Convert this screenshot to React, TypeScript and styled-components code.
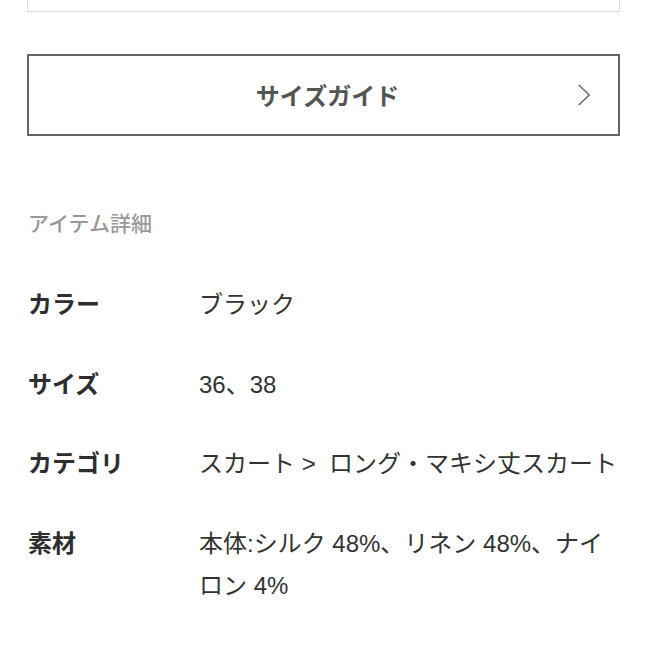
import React from 'react';
import styled, { createGlobalStyle } from 'styled-components';

const GlobalStyle = createGlobalStyle`
  html, body {
    margin: 0;
    padding: 0;
    background: #fff;
  }
  body {
    font-family: "Liberation Sans", "Noto Sans CJK JP", sans-serif;
    color: #333;
  }
`;

const specs = [
  { label: 'カラー', value: 'ブラック' },
  { label: 'サイズ', value: '36、38' },
  { label: 'カテゴリ', value: 'スカート >\u00a0 ロング・マキシ丈スカート' },
  { label: '素材', value: '本体:シルク 48%、リネン 48%、ナイロン 4%' },
];

export default function App() {
  return (
    <>
      <GlobalStyle />
      <Page>
        <TopBox />
        <GuideButton type='button'>
          <span>サイズガイド</span>
          <Chevron viewBox='0 0 16 26' aria-hidden='true'>
            <polyline points='2,1.5 14,13 2,24.5' />
          </Chevron>
        </GuideButton>

        <Heading>アイテム詳細</Heading>

        <SpecList>
          {specs.map((s) => (
            <SpecRow key={s.label}>
              <dt>{s.label}</dt>
              <dd>{s.value}</dd>
            </SpecRow>
          ))}
        </SpecList>
      </Page>
    </>
  );
}

const Page = styled.main`
  width: 648px;
  height: 648px;
  overflow: hidden;
  box-sizing: border-box;
  padding: 0 28px 0 27px;
`;

const TopBox = styled.div`
  height: 11px;
  border: 1px solid #dcdcdc;
  border-top: none;
`;

const GuideButton = styled.button`
  position: relative;
  display: flex;
  align-items: center;
  justify-content: center;
  width: 100%;
  height: 82px;
  margin-top: 42px;
  box-sizing: border-box;
  border: 2px solid #666;
  background: #fff;
  font-family: "Noto Sans CJK JP", sans-serif;
  font-size: 24px;
  font-weight: 700;
  color: #555;
  cursor: pointer;
  padding: 0;

  span {
    margin-left: 8px;
    margin-top: -2px;
  }
`;

const Chevron = styled.svg`
  position: absolute;
  right: 27px;
  top: 50%;
  width: 14px;
  height: 24px;
  transform: translateY(-50%);

  polyline {
    fill: none;
    stroke: #6a6a6a;
    stroke-width: 1.7;
  }
`;

const Heading = styled.h2`
  margin: 72px 0 0 1px;
  font-family: "Noto Sans CJK JP", sans-serif;
  font-size: 21px;
  line-height: 28px;
  font-weight: 500;
  color: #999;
`;

const SpecList = styled.dl`
  display: flex;
  flex-direction: column;
  gap: 35.5px;
  margin: 46px 0 0;
`;

const SpecRow = styled.div`
  display: grid;
  grid-template-columns: 172px 1fr;
  font-size: 24px;
  line-height: 42px;

  dt {
    font-family: "Noto Sans CJK JP", sans-serif;
    font-weight: 700;
    color: #2e2e2e;
    padding-left: 1px;
  }

  dd {
    margin: 0;
    padding-top: 2px;
    color: #333;
  }
`;
